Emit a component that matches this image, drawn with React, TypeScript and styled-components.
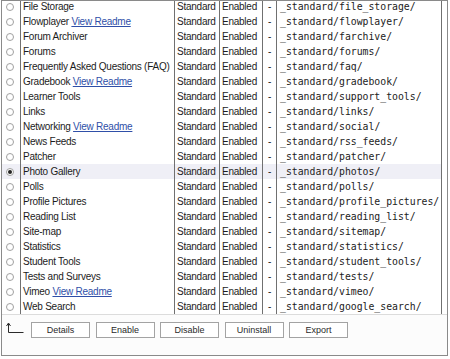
import React from "react";
import styled, { createGlobalStyle } from "styled-components";

const GlobalStyle = createGlobalStyle`
  html, body { margin: 0; padding: 0; background: #ffffff; }
  body { font-family: "Liberation Sans", Arial, sans-serif; }
`;

const Frame = styled.div`
  box-sizing: border-box;
  margin-left: 1px;
  width: 447px;
  height: 356px;
  border: 1px solid #8a8a8a;
  display: flex;
  flex-direction: column;
  overflow: hidden;
  background: #ffffff;
`;

const List = styled.div`
  margin-top: -2px;
  display: flex;
  flex-direction: column;
`;

const Row = styled.div<{ $selected?: boolean }>`
  display: grid;
  grid-template-columns: 18px 154px 45px 43px 14px 166px;
  height: 15px;
  background: ${(p) => (p.$selected ? "#efeff6" : "transparent")};
  width: 440px;
`;

const Cell = styled.div`
  box-sizing: border-box;
  border-left: 1px solid #707070;
  font-size: 10px;
  letter-spacing: -0.25px;
  line-height: 15px;
  color: #1c1c1c;
  white-space: nowrap;
  overflow: hidden;
  padding-left: 2px;
`;

const RadioCell = styled.div`
  display: flex;
  align-items: center;
  padding-left: 4px;
`;

const Radio = styled.span<{ $checked?: boolean }>`
  box-sizing: border-box;
  width: 8px;
  height: 8px;
  border-radius: 50%;
  border: 1px solid #a0a0a0;
  background: #ffffff;
  display: flex;
  align-items: center;
  justify-content: center;
  &::after {
    content: "";
    display: ${(p) => (p.$checked ? "block" : "none")};
    width: 4px;
    height: 4px;
    border-radius: 50%;
    background: #222222;
  }
`;

const DashCell = styled(Cell)`
  padding-left: 0;
  text-align: center;
`;

const PathCell = styled(Cell)`
  border-right: 1px solid #707070;
  padding-left: 3px;
  font-family: "DejaVu Sans Mono", "Liberation Mono", monospace;
  font-size: 9.8px;
  letter-spacing: 0;
  color: #222222;
`;

const Readme = styled.a`
  color: #2f4fa8;
  text-decoration: underline;
  cursor: pointer;
`;

const Footer = styled.div`
  flex: 1;
  border-top: 1px solid #dcdcdc;
  background: #fcfcfc;
  display: flex;
  align-items: flex-start;
  padding: 7px 0 0 4px;
  margin-top: 0;
`;

const CornerArrow = styled.svg`
  width: 18px;
  height: 12px;
  margin-right: 7px;
  flex: none;
`;

const Buttons = styled.div`
  display: flex;
  gap: 5.5px;
`;

const Button = styled.button`
  box-sizing: border-box;
  width: 59px;
  height: 16px;
  padding: 0;
  border: 1px solid #a3a3a3;
  background: #ffffff;
  font-family: "Liberation Sans", Arial, sans-serif;
  font-size: 9px;
  color: #2a2a2a;
  line-height: 14px;
`;

type Item = { name: string; readme?: boolean; path: string; selected?: boolean };

const items: Item[] = [
  { name: "File Storage", path: "file_storage" },
  { name: "Flowplayer", readme: true, path: "flowplayer" },
  { name: "Forum Archiver", path: "farchive" },
  { name: "Forums", path: "forums" },
  { name: "Frequently Asked Questions (FAQ)", path: "faq" },
  { name: "Gradebook", readme: true, path: "gradebook" },
  { name: "Learner Tools", path: "support_tools" },
  { name: "Links", path: "links" },
  { name: "Networking", readme: true, path: "social" },
  { name: "News Feeds", path: "rss_feeds" },
  { name: "Patcher", path: "patcher" },
  { name: "Photo Gallery", path: "photos", selected: true },
  { name: "Polls", path: "polls" },
  { name: "Profile Pictures", path: "profile_pictures" },
  { name: "Reading List", path: "reading_list" },
  { name: "Site-map", path: "sitemap" },
  { name: "Statistics", path: "statistics" },
  { name: "Student Tools", path: "student_tools" },
  { name: "Tests and Surveys", path: "tests" },
  { name: "Vimeo", readme: true, path: "vimeo" },
  { name: "Web Search", path: "google_search" },
];

export default function App() {
  return (
    <>
      <GlobalStyle />
      <Frame>
        <List>
          {items.map((it) => (
            <Row key={it.name} $selected={it.selected}>
              <RadioCell>
                <Radio $checked={it.selected} />
              </RadioCell>
              <Cell>
                {it.name}
                {it.readme && (
                  <>
                    {" "}
                    <Readme>View Readme</Readme>
                  </>
                )}
              </Cell>
              <Cell>Standard</Cell>
              <Cell>Enabled</Cell>
              <DashCell>-</DashCell>
              <PathCell>_standard/{it.path}/</PathCell>
            </Row>
          ))}
        </List>
        <Footer>
          <CornerArrow viewBox="0 0 18 12">
            <path d="M2.5 1.5 V10.5 H17.5" fill="none" stroke="#2a2a2a" strokeWidth="1" />
            <path d="M0.5 4 L2.5 1 L4.5 4" fill="none" stroke="#2a2a2a" strokeWidth="1" />
          </CornerArrow>
          <Buttons>
            <Button>Details</Button>
            <Button>Enable</Button>
            <Button>Disable</Button>
            <Button>Uninstall</Button>
            <Button>Export</Button>
          </Buttons>
        </Footer>
      </Frame>
    </>
  );
}
